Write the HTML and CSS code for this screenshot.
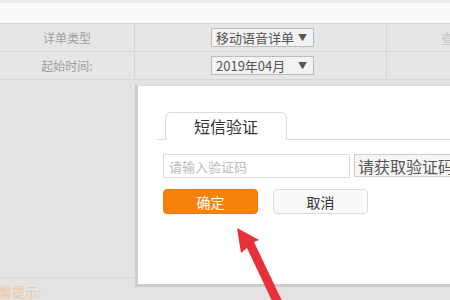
FILE: index.html
```html
<!DOCTYPE html>
<html lang="zh-CN">
<head>
    <meta charset="UTF-8">
    <title>短信验证</title>
    <link rel="stylesheet" href="styles.css">
</head>
<body>
    <div class="top-strip"></div>

    <div class="query-table">
        <div class="row">
            <div class="cell label">详单类型</div>
            <div class="cell field"><span class="select">移动语音详单 <i>▼</i></span></div>
            <div class="cell extra">查</div>
        </div>
        <div class="row">
            <div class="cell label">起始时间:</div>
            <div class="cell field"><span class="select">2019年04月 <i>▼</i></span></div>
            <div class="cell extra"></div>
        </div>
    </div>

    <div class="lower">
        <div class="side"></div>
        <div class="tips">温馨提示:</div>
    </div>

    <div class="modal">
        <div class="tab-bar">
            <div class="tab">短信验证</div>
        </div>
        <div class="code-row">
            <input class="code-input" type="text" placeholder="请输入验证码">
            <button class="get-code">请获取验证码</button>
        </div>
        <div class="btn-row">
            <button class="btn ok">确定</button>
            <button class="btn cancel">取消</button>
        </div>
    </div>

    <svg class="arrow" width="90" height="80" viewBox="0 0 90 80">
        <polygon points="0,0 4,25 10,20 36,75 46,75 17,14 22,12" fill="#e8303a"/>
    </svg>
</body>
</html>
```

FILE: styles.css
```css
body {
    margin: 0;
    width: 450px;
    height: 300px;
    overflow: hidden;
    background: #e3e3e3;
    font-family: "Noto Sans CJK SC", "Noto Sans", sans-serif;
    position: relative;
}
.top-strip {
    height: 20px;
    border-top: 3px solid #ececec;
    border-bottom: 1px solid #d4d4d4;
    background: #fafafa;
}
.query-table {
    background: #e6e6e6;
}
.row {
    display: flex;
    height: 27px;
    border-bottom: 1px solid #d6d6d6;
}
.cell {
    display: flex;
    align-items: center;
    font-size: 12px;
    color: #a0a0a0;
}
.cell.label {
    width: 134px;
    justify-content: center;
    border-right: 1px solid #d6d6d6;
}
.cell.field {
    width: 252px;
    padding-left: 76px;
    box-sizing: border-box;
    border-right: 1px solid #d6d6d6;
}
.cell.extra {
    flex: 1;
    justify-content: flex-end;
    color: #c8c8c8;
    font-size: 13px;
    margin-right: -4px;
}
.select {
    display: inline-block;
    width: 103px;
    height: 19px;
    line-height: 18px;
    padding-left: 4px;
    box-sizing: border-box;
    border: 1px solid #bdbdbd;
    background: #f2f2f2;
    color: #555;
    font-size: 13px;
    position: relative;
}
.select i {
    font-style: normal;
    font-size: 9px;
    position: absolute;
    right: 6px;
    top: 0;
}
.lower {
    height: 221px;
}
.side {
    width: 135px;
    height: 197px;
    border-bottom: 1px solid #d6d6d6;
}
.tips {
    margin-left: -14px;
    margin-top: 4px;
    font-size: 13px;
    color: #f0c7a3;
}
.modal {
    position: absolute;
    left: 135px;
    top: 85px;
    width: 340px;
    height: 202px;
    background: #fff;
    border-left: 3px solid #cdcdcd;
    border-bottom: 3px solid #cdcdcd;
    border-top: 1px solid #dcdcdc;
    padding: 26px 0 0 25px;
    box-sizing: border-box;
}
.tab-bar {
    margin-left: -6px;
    padding-left: 8px;
    border-bottom: 1px solid #dcdcdc;
    display: flex;
}
.tab {
    width: 120px;
    height: 27px;
    line-height: 27px;
    text-align: center;
    border: 1px solid #dcdcdc;
    border-bottom: none;
    border-radius: 6px 6px 0 0;
    font-size: 16px;
    color: #333;
    margin-bottom: -1px;
    background: #fff;
}
.code-row {
    display: flex;
    align-items: flex-start;
    margin-top: 14px;
    gap: 4px;
}
.code-input {
    width: 187px;
    height: 24px;
    box-sizing: border-box;
    border: 1px solid #dcdcdc;
    padding: 0 5px;
    font-family: inherit;
    font-size: 13px;
    outline: none;
}
.code-input::placeholder {
    color: #bbb;
}
.get-code {
    height: 23px;
    padding: 0 3px;
    border: 1px solid #cfcfcf;
    background: #f6f6f6;
    font-family: inherit;
    font-size: 16px;
    color: #555;
    line-height: 20px;
    white-space: nowrap;
}
.btn-row {
    display: flex;
    gap: 15px;
    margin-top: 11px;
}
.btn {
    width: 95px;
    height: 25px;
    border-radius: 4px;
    font-family: inherit;
    font-size: 14px;
    padding: 0;
}
.btn.ok {
    background: #f7820c;
    border: 1px solid #f07a05;
    color: #fff;
}
.btn.cancel {
    background: #fafafa;
    border: 1px solid #dcdcdc;
    color: #333;
}
.arrow {
    position: absolute;
    left: 237px;
    top: 228px;
}
```
